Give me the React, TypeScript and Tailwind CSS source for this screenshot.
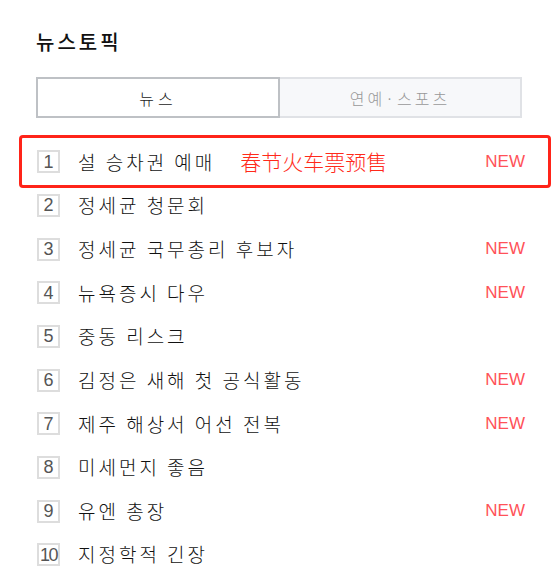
import React from "react";

const rows: { n: number; t: string; isNew: boolean }[] = [
  { n: 1, t: "설 승차권 예매", isNew: true },
  { n: 2, t: "정세균 청문회", isNew: false },
  { n: 3, t: "정세균 국무총리 후보자", isNew: true },
  { n: 4, t: "뉴욕증시 다우", isNew: true },
  { n: 5, t: "중동 리스크", isNew: false },
  { n: 6, t: "김정은 새해 첫 공식활동", isNew: true },
  { n: 7, t: "제주 해상서 어선 전복", isNew: true },
  { n: 8, t: "미세먼지 좋음", isNew: false },
  { n: 9, t: "유엔 총장", isNew: true },
  { n: 10, t: "지정학적 긴장", isNew: false },
];

const kr = { fontFamily: '"Noto Sans CJK KR", "Noto Sans", sans-serif' };

export default function App() {
  return (
    <div className="relative w-[556px] h-[579px] bg-white overflow-hidden" style={kr}>
      <div className="pl-[36px] pr-[34px] pt-[30px]">
        <div className="text-[20px] leading-[24px] text-[#111] font-medium tracking-[3px]">뉴스토픽</div>
        <div className="mt-[23px] flex h-[41px]">
          <div className="flex-1 flex items-center justify-center border-2 border-[#bec1c5] bg-white text-[16px] text-[#222] tracking-[4px] font-light">
            뉴스
          </div>
          <div className="flex-1 flex items-center justify-center border-2 border-l-0 border-[#e0e2e6] bg-[#f7f8fa] text-[16px] text-[#999] tracking-[3px] font-light">
            연예·스포츠
          </div>
        </div>
        <div className="mt-[22px] flex flex-col">
          {rows.map((r) => (
            <div key={r.n} className="h-[43.67px] flex items-center">
              <div
                className="w-[23px] h-[23px] ml-[1px] border-2 border-[#dddddd] flex items-center justify-center text-[18px] text-[#555] leading-none"
                style={{ fontFamily: '"Liberation Sans", Arial, sans-serif', letterSpacing: r.n === 10 ? "-1.5px" : undefined }}
              >
                {r.n}
              </div>
              <div className="ml-[18px] text-[19px] text-[#111] tracking-[3px] whitespace-nowrap font-light">{r.t}</div>
              {r.n === 1 && (
                <div
                  className="ml-[25px] text-[21px] text-[#ff2a1a] whitespace-nowrap font-light"
                  style={{ fontFamily: '"Noto Sans CJK SC", sans-serif' }}
                >
                  春节火车票预售
                </div>
              )}
              <div className="flex-1" />
              {r.isNew && (
                <div
                  className="text-[17px] text-[#ff5258] mr-[-3px]"
                  style={{ fontFamily: '"Liberation Sans", Arial, sans-serif' }}
                >
                  NEW
                </div>
              )}
            </div>
          ))}
        </div>
      </div>
      <div className="absolute left-[19px] top-[135px] w-[532px] h-[53px] border-[3px] border-[#ff2419] rounded-[4px]" />
    </div>
  );
}
